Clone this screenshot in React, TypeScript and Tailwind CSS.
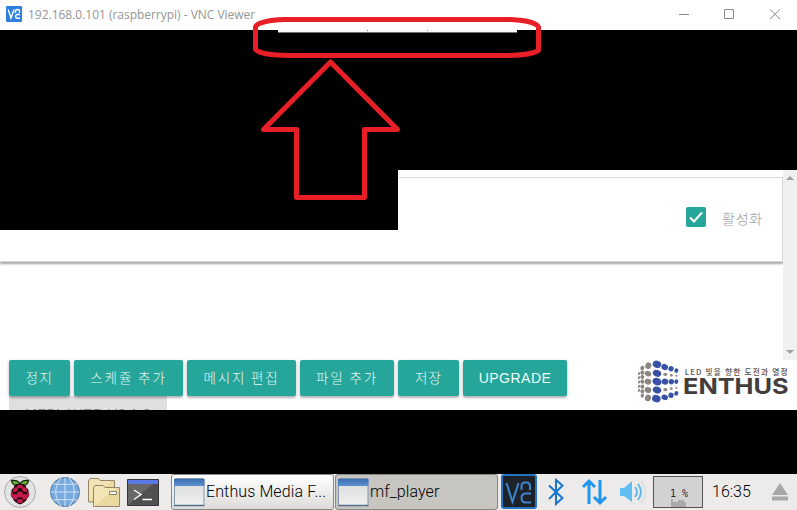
import type { ReactNode } from "react";

const LATIN = "font-['Roboto','Noto_Sans_CJK_KR',sans-serif]";

const buttons = [
  { label: "정지", box: "w-[61px]", text: "tracking-[1.6px]" },
  { label: "스케쥴 추가", box: "w-[109px]", text: "tracking-[1.9px]" },
  { label: "메시지 편집", box: "w-[109px]", text: "tracking-[1.8px]" },
  { label: "파일 추가", box: "w-[94px]", text: "tracking-[1.9px]" },
  { label: "저장", box: "w-[61px]", text: "tracking-[1.2px]" },
];

// cx, cy, rx, ry for the dots of the cube
const greyDots = [
  [27, 101, 3, 5], [27, 113, 3, 5], [27, 126, 3, 5], [27, 139, 3, 5], [27, 151, 3, 5],
  [37, 84, 6, 7], [37, 98, 6, 6], [37, 111, 6, 6], [37, 125, 6, 6], [37, 140, 6, 6], [37, 154, 6, 6], [37, 167, 5, 6],
  [55, 77, 9, 10], [54, 101, 10, 8], [54, 125, 10, 9], [54, 150, 10, 9], [54, 174, 9, 10],
  [106, 103, 6, 5], [124, 106, 4, 4], [139, 107, 3, 3],
  [106, 149, 6, 5], [124, 146, 4, 4], [139, 144, 3, 3],
];
const blueDots = [
  [81, 73, 13, 11], [81, 100, 13, 10], [81, 125, 14, 11], [81, 150, 13, 10], [79, 176, 13, 11],
  [104, 81, 10, 9], [123, 86, 8, 8], [139, 92, 6, 7],
  [105, 125, 10, 9], [124, 125, 8, 8], [139, 125, 6, 7],
  [104, 172, 10, 8], [123, 166, 8, 8], [139, 160, 6, 7],
];

function EnthusLogo() {
  return (
    <svg width="167" height="70" viewBox="0 0 501 210" className="block">
      {greyDots.map(([x, y, rx, ry], i) => (
        <ellipse key={i} cx={x} cy={y} rx={rx} ry={ry} fill="#8b8582" transform={x < 60 ? `rotate(25 ${x} ${y})` : undefined} />
      ))}
      {blueDots.map(([x, y, rx, ry], i) => (
        <ellipse key={i} cx={x} cy={y} rx={rx} ry={ry} fill="#3952a4" transform={`rotate(20 ${x} ${y})`} />
      ))}
      <text x="164" y="104" textLength="309" fontSize="23" fontWeight="500" fill="#55504f" fontFamily="'Noto Sans CJK KR', sans-serif">
        LED 빛을 향한 도전과 열정
      </text>
      <text x="159" y="163" textLength="317" lengthAdjust="spacingAndGlyphs" fontSize="66" fontWeight="700" fill="#433d3d" fontFamily="Inter, sans-serif">
        ENTHUS
      </text>
    </svg>
  );
}

function TitleBar() {
  return (
    <header className="flex h-[30px] items-center bg-white pl-[6px]">
      <svg width="16" height="16" viewBox="0 0 16 16" className="mt-[-2px] shrink-0">
        <rect width="16" height="16" rx="1" fill="#2f80dc" />
        <path d="M2.2 3.5 5 12 8 3.5M9.5 7V5Q9.5 3.5 11.5 3.5T13.5 5V7M14 8.5H11.5Q9.5 8.5 9.5 10.3T11.5 12.2H14" fill="none" stroke="#fff" strokeWidth="1.4" />
      </svg>
      <span className="ml-[6px] w-[228px] whitespace-nowrap font-['Open_Sans','Noto_Sans',sans-serif] text-[12px] tracking-[-0.02px] text-[#959595]">
        192.168.0.101 (raspberrypi) - VNC Viewer
      </span>
      <svg width="118" height="30" viewBox="0 0 118 30" className="ml-auto" fill="none" stroke="#8a8a8a">
        <path d="M0 14.5H10M45.500 9.500H54.500V18.500H45.500ZM91 9.500 101 19M101 9.500 91 19" />
      </svg>
    </header>
  );
}

function ScrollBar() {
  return (
    <div className="flex w-[14px] shrink-0 flex-col items-center justify-between bg-[#f0f0f0] py-[6px]">
      <svg width="8" height="4" viewBox="0 0 8 4"><path d="M0 4 4 0 8 4Z" fill="#a0a0a0" /></svg>
      <svg width="8" height="4" viewBox="0 0 8 4"><path d="M0 0 4 4 8 0Z" fill="#a0a0a0" /></svg>
    </div>
  );
}

function ActionButton({ box, children }: { box: string; children: ReactNode }) {
  return (
    <button className={`flex h-9 shrink-0 items-center justify-center rounded-[2px] bg-[#26a69a] shadow-[0_2px_2px_rgba(0,0,0,0.22),0_1px_4px_rgba(0,0,0,0.14)] ${box}`}>
      {children}
    </button>
  );
}

function WindowIcon() {
  return (
    <svg width="31" height="29" viewBox="0 0 31 29" className="shrink-0">
      <defs>
        <linearGradient id="pane" x2="0" y2="1"><stop stopColor="#d7d8da" /><stop offset="1" stopColor="#f1f1f0" /></linearGradient>
        <linearGradient id="bar" x2="0" y2="1"><stop stopColor="#376eb1" /><stop offset="1" stopColor="#5f91cd" /></linearGradient>
      </defs>
      <rect x=".5" y=".5" width="29.500" height="27" rx="1" fill="url(#pane)" stroke="#8296ad" />
      <path d="M0 1H30.500V8H0Z" fill="url(#bar)" />
      <path d="M0 27.500H30.500" stroke="#526c8a" strokeWidth="1.500" />
    </svg>
  );
}

function TaskBar() {
  return (
    <footer className={`flex h-9 items-center bg-[#edebe9] text-black ${LATIN}`}>
      <svg width="168" height="36" viewBox="0 0 168 36" className="shrink-0">
        <defs>
          <linearGradient id="folder" x2="1" y2="1"><stop offset=".5" stopColor="#f2e4b5" /><stop offset=".5" stopColor="#ecd99f" /></linearGradient>
          <linearGradient id="term" x2="1" y2="1"><stop offset=".5" stopColor="#686868" /><stop offset=".5" stopColor="#505052" /></linearGradient>
        </defs>
        <circle cx="20" cy="18" r="15.500" fill="#e3e3e3" stroke="#adadad" />
        <path d="M19.500 12Q12 12 11.500 6.500 18 5.500 20 10 22 5.500 28.500 6.500 28 12 20.500 12Z" fill="#69ad35" stroke="#182912" strokeWidth="1.300" />
        <path d="M20 10Q25 9 26.500 14 29 15 28.500 18 30.500 21 27.500 24 26 28 20 30.500 14 28 12.500 24 9.500 21 11.500 18 11 15 13.500 14 15 9 20 10Z" fill="#230811" />
        <g fill="#c51a4a">
          <ellipse cx="20" cy="12.500" rx="3" ry="1.700" /><ellipse cx="15.500" cy="15.500" rx="3" ry="2.100" transform="rotate(-35 15.500 15.500)" /><ellipse cx="24.500" cy="15.500" rx="3" ry="2.100" transform="rotate(35 24.500 15.500)" />
          <circle cx="20" cy="20.500" r="3" /><circle cx="15.200" cy="22.800" r="2.800" /><circle cx="24.800" cy="22.800" r="2.800" /><ellipse cx="20" cy="27" rx="3" ry="2" /><ellipse cx="12" cy="20.500" rx="1.100" ry="2.400" /><ellipse cx="28" cy="20.500" rx="1.100" ry="2.400" />
        </g>
        <circle cx="65" cy="18" r="14.500" fill="#78aadf" stroke="#51799f" />
        <path d="M65 3.500V32.500M50.500 18H79.500M53 10Q65 11 77 10M53 26Q65 25 77 26M61 4C54 12 54 24 61 32M69 4C76 12 76 24 69 32" fill="none" stroke="#d2e4f7" />
        <g fill="url(#folder)" stroke="#948769">
          <path d="M88.500 28V7L90 4.500H98.500L100 6.500H114.500V28Z" />
          <path d="M93.500 32.500V14L95 11.500H103.500L105 13.500H119.500V32.500Z" />
        </g>
        <path d="M109.500 17.500H116.500V20.500H109.500Z" fill="#fff" stroke="#8b8267" />
        <path d="M127.500 5.500H158.500V31.500H127.500Z" fill="url(#term)" stroke="#35353a" />
        <path d="M128 6H158V10H128Z" fill="#5978e4" />
        <path d="M134 16 141 20.500 134 25.500M142.500 25.500H152" fill="none" stroke="#fff" strokeWidth="1.300" />
      </svg>
      <div className="ml-[3px] flex h-9 w-[163px] items-center rounded-[3px] border border-[#898782] bg-linear-to-b from-white to-[#dddcda] pl-[2px]">
        <WindowIcon />
        <span className="ml-[1px] whitespace-nowrap text-[16px] font-light tracking-[0.11px]">Enthus Media F...</span>
      </div>
      <div className="ml-[1px] flex h-9 w-[163px] items-center rounded-[3px] border border-[#898782] bg-[#c7c5c0] pl-[2px]">
        <WindowIcon />
        <span className="ml-[1px] text-[16px] font-light tracking-[0.11px]">mf_player</span>
      </div>
      <svg width="152" height="36" viewBox="0 0 152 36" className="ml-[3px] shrink-0" fill="none">
        <rect x="1" y="1" width="34" height="33" rx="2" fill="#1d2228" stroke="#2475c5" strokeWidth="2" />
        <path d="M5.500 9 11.500 28 17.500 9M20.500 16V12.500Q20.500 8.500 24 8.500H25.500Q29 8.500 29 12.500V16M30 19.500H25Q20.500 19.500 20.500 24T25 28.500H30" stroke="#3d85ce" strokeWidth="2" />
        <path d="M48 11.500 61.500 24 55 30V6L61.500 11.500 48 25" stroke="#1775d2" strokeWidth="2" />
        <path d="M88 30V8M82 13 88 7 94 13M99 6V28M93 23 99 29 105 23" stroke="#1e96ee" strokeWidth="3" />
        <path d="M119 14H123L131 7V28L123 22H119Z" fill="#62bdf3" />
        <path d="M134 13Q138 18 134 23M137 10Q143 18 137 26" stroke="#60b9ec" strokeWidth="2" />
        <path d="M140 7Q149 18 140 29" stroke="#dbe2e7" strokeWidth="2" />
      </svg>
      <svg width="50" height="33" viewBox="0 0 50 33" className="shrink-0">
        <rect x=".5" y=".5" width="49" height="31" fill="#d2d2d2" stroke="#555" />
        <path d="M18 31V23H20V26H25V24H31V26H33V31Z" fill="#aaa" />
        <text x="17" y="21" fontFamily="'DejaVu Sans Mono', monospace" fontSize="10" fill="#282828">1 %</text>
      </svg>
      <span className="ml-[9px] w-[40px] whitespace-nowrap text-[16px] font-light">16:35</span>
      <svg width="16" height="18" viewBox="0 0 16 18" className="ml-[20px] shrink-0" fill="#a8a8a8"><path d="M0 12 8 0 16 12ZM0 13.500H16V17.500H0Z" /></svg>
    </footer>
  );
}

export default function App() {
  return (
    <div className="relative h-[510px] w-[797px] overflow-hidden bg-black">
      <TitleBar />
      <div className="h-[140px] bg-black pl-[278px]">
        <div className="flex h-[3px] w-[239px] gap-[59px] border-b border-[#737573] bg-[#fafafa] pl-[89px]">
          <i className="h-[1px] w-[1px] bg-[#777]" />
          <i className="h-[1px] w-[1px] bg-[#777]" />
        </div>
      </div>
      <main className="relative h-[240px] overflow-hidden bg-white">
        <div className="flex h-[190px]">
          <div className="flex-1 pt-[7px]">
            <section className="flex h-[85px] items-center justify-end border border-l-0 border-[#d9d9d9] bg-white pr-[19px] shadow-[0_2px_2px_rgba(0,0,0,0.35)]">
              <label className="flex items-center">
                <svg width="20" height="20" viewBox="0 0 20 20" className="mt-[-6px]">
                  <rect width="20" height="20" rx="2" fill="#26a69a" />
                  <path d="M4 10.500 8 14.500 16 5.500" fill="none" stroke="#fff" strokeWidth="2" />
                </svg>
                <span className="mt-[-3px] ml-4 w-[41px] whitespace-nowrap font-['Noto_Sans_CJK_KR',sans-serif] text-[14px] font-light tracking-[0.8px] text-[#9c9c9c]">활성화</span>
              </label>
            </section>
          </div>
          <ScrollBar />
        </div>
        <div className="flex h-[50px] justify-between pl-[9px]">
          <div>
            <div className="flex gap-1">
              {buttons.map((b) => (
                <ActionButton key={b.label} box={b.box}>
                  <span className={`mt-[-2px] whitespace-nowrap font-['Noto_Sans_CJK_KR',sans-serif] text-[13.500px] font-light text-[#e6f7f5] ${b.text}`}>{b.label}</span>
                </ActionButton>
              ))}
              <ActionButton box="w-[104px]">
                <span className="font-['Liberation_Sans',Arial,sans-serif] text-[14px] tracking-[0.5px] text-[#eefcfb]">UPGRADE</span>
              </ActionButton>
            </div>
            <div className="h-[14px] w-[158px] overflow-hidden bg-[#dfdfdf] pt-[8px] pl-4 font-['Liberation_Sans',Arial,sans-serif] text-[14px] leading-[20px] tracking-[0.5px] whitespace-nowrap text-[#888]">
              MFPLAYER V0.1.9
            </div>
          </div>
          <div className="mt-[-5px] h-[55px] overflow-hidden">
            <div className="mt-[-15px]"><EnthusLogo /></div>
          </div>
        </div>
        <div className="absolute top-0 left-0 h-[60px] w-[398px] bg-black" />
      </main>
      <div className="h-16 bg-black" />
      <TaskBar />
      <svg width="300" height="190" viewBox="250 12 300 190" className="pointer-events-none absolute top-[12px] left-[250px]" fill="none" stroke="#e91f27" strokeWidth="5" strokeLinejoin="round">
        <path d="M284 19.500H511C522 20 536 22 538.500 27V50C535 54 518 55.500 503 55.500H290C271 55.500 257 53 255.500 49V27C257 22 272 20 284 19.500Z" />
        <path d="M330.500 62 397.500 129.500H364.500V197.500H296.500V129.500H263.500Z" />
      </svg>
    </div>
  );
}
